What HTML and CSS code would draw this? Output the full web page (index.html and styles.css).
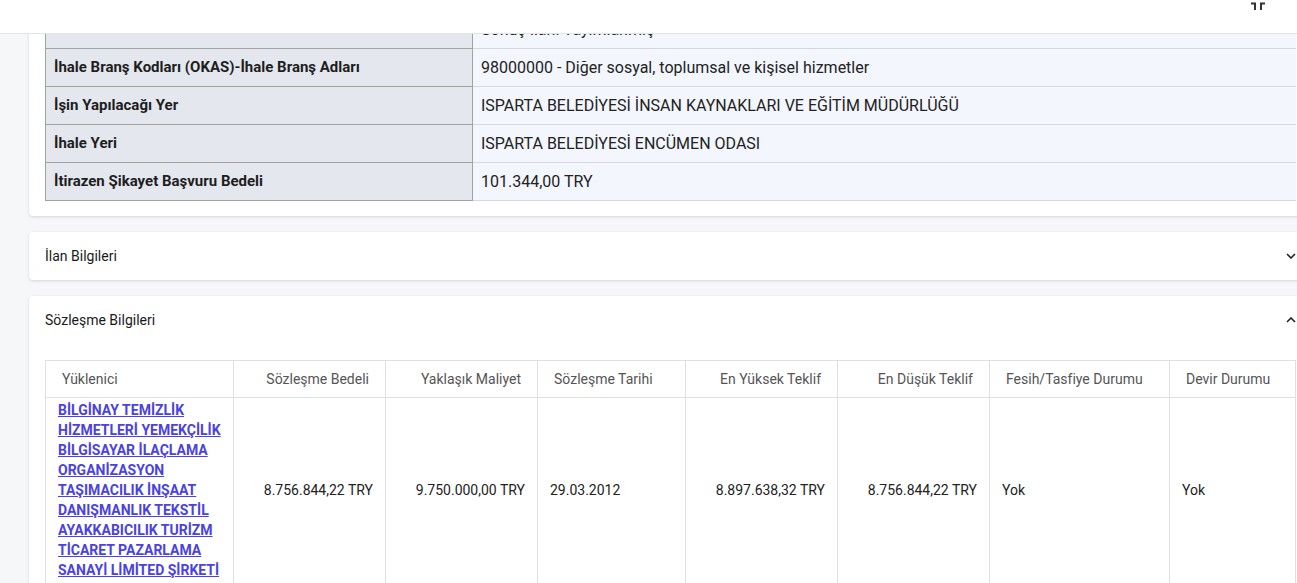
FILE: index.html
```html
<!DOCTYPE html>
<html lang="tr">
<head>
    <meta charset="UTF-8">
    <meta name="viewport" content="width=device-width, initial-scale=1.0">
    <title>İhale Detayı</title>
    <link rel="stylesheet" href="styles.css">
</head>
<body>
    <div class="topbar">
        <svg class="fs-icon" width="16" height="10" viewBox="0 0 16 10">
            <path d="M1 2.5 H5 V9" fill="none" stroke="#333" stroke-width="2"/>
            <path d="M15 2.5 H11 V9" fill="none" stroke="#333" stroke-width="2"/>
        </svg>
    </div>

    <div class="page">
        <div class="card card-info">
            <table class="info-table">
                <tr>
                    <th>İhale Durumu</th>
                    <td>Sonuç İlanı Yayımlanmış</td>
                </tr>
                <tr>
                    <th>İhale Branş Kodları (OKAS)-İhale Branş Adları</th>
                    <td>98000000 - Diğer sosyal, toplumsal ve kişisel hizmetler</td>
                </tr>
                <tr>
                    <th>İşin Yapılacağı Yer</th>
                    <td>ISPARTA BELEDİYESİ İNSAN KAYNAKLARI VE EĞİTİM MÜDÜRLÜĞÜ</td>
                </tr>
                <tr>
                    <th>İhale Yeri</th>
                    <td>ISPARTA BELEDİYESİ ENCÜMEN ODASI</td>
                </tr>
                <tr>
                    <th>İtirazen Şikayet Başvuru Bedeli</th>
                    <td>101.344,00 TRY</td>
                </tr>
            </table>
        </div>

        <div class="card">
            <div class="card-head">
                <span>İlan Bilgileri</span>
                <svg class="chev" width="10" height="6" viewBox="0 0 10 6"><path d="M1 1 L5 5 L9 1" fill="none" stroke="#222" stroke-width="1.6"/></svg>
            </div>
        </div>

        <div class="card">
            <div class="card-head">
                <span>Sözleşme Bilgileri</span>
                <svg class="chev" width="10" height="6" viewBox="0 0 10 6"><path d="M1 5 L5 1 L9 5" fill="none" stroke="#222" stroke-width="1.6"/></svg>
            </div>
            <div class="card-body">
                <table class="contract-table">
                    <thead>
                        <tr>
                            <th class="c1">Yüklenici</th>
                            <th class="c2 num">Sözleşme Bedeli</th>
                            <th class="c3 num">Yaklaşık Maliyet</th>
                            <th class="c4">Sözleşme Tarihi</th>
                            <th class="c5 num">En Yüksek Teklif</th>
                            <th class="c6 num">En Düşük Teklif</th>
                            <th class="c7">Fesih/Tasfiye Durumu</th>
                            <th>Devir Durumu</th>
                        </tr>
                    </thead>
                    <tbody>
                        <tr>
                            <td class="firm-cell"><a href="#" class="firm">BİLGİNAY TEMİZLİK HİZMETLERİ YEMEKÇİLİK BİLGİSAYAR İLAÇLAMA ORGANİZASYON TAŞIMACILIK İNŞAAT DANIŞMANLIK TEKSTİL AYAKKABICILIK TURİZM TİCARET PAZARLAMA SANAYİ LİMİTED ŞİRKETİ</a></td>
                            <td class="num">8.756.844,22 TRY</td>
                            <td class="num">9.750.000,00 TRY</td>
                            <td>29.03.2012</td>
                            <td class="num">8.897.638,32 TRY</td>
                            <td class="num">8.756.844,22 TRY</td>
                            <td>Yok</td>
                            <td>Yok</td>
                        </tr>
                    </tbody>
                </table>
            </div>
        </div>
    </div>
</body>
</html>
```

FILE: styles.css
```css
html, body {
    margin: 0;
    padding: 0;
}
body {
    font-family: Roboto, "Noto Sans", Arial, sans-serif;
    font-size: 14px;
    color: #222;
    background-color: #f6f7f9;
    overflow: hidden;
    height: 583px;
}
.topbar {
    position: fixed;
    top: 0;
    left: 0;
    right: 0;
    height: 33px;
    background: #fff;
    border-bottom: 1px solid #e2e4e8;
    z-index: 10;
}
.fs-icon {
    position: absolute;
    left: 1250px;
    top: 1px;
}
.page {
    margin-top: -6px;
    padding-left: 29px;
    width: 1283px;
    display: flex;
    flex-direction: column;
    gap: 16px;
}
.card {
    background: #fff;
    border-radius: 4px;
    box-shadow: 0 1px 3px rgba(0,0,0,0.14);
}
.card-info {
    padding: 16px 16px 15px;
}
.info-table {
    width: 100%;
    border-collapse: collapse;
    font-size: 16px;
}
.info-table th,
.info-table td {
    padding: 8px 8px;
    line-height: 21px;
    text-align: left;
    vertical-align: middle;
}
.info-table th {
    width: 410px;
    background: #e4e7ee;
    border: 1px solid #a2a2a2;
    font-weight: 700;
    font-size: 15px;
    color: #1e1e1e;
}
.info-table td {
    background: #f3f6fd;
    border-top: 1px solid #d6d8dc;
    border-bottom: 1px solid #d6d8dc;
    color: #222;
}
.card-head {
    height: 48px;
    padding: 0 16px;
    display: flex;
    align-items: center;
    justify-content: space-between;
    font-size: 14px;
    color: #1a1a1a;
}
.card-body {
    padding: 16px 16px 0;
}
.contract-table {
    width: 100%;
    border-collapse: collapse;
    table-layout: fixed;
    font-size: 14px;
}
.contract-table th,
.contract-table td {
    border: 1px solid #e0e0e0;
    text-align: left;
}
.contract-table th {
    font-weight: 400;
    color: #555;
    padding: 0 16px;
    height: 36px;
}
.contract-table td {
    padding: 2px 12px 12px 12px;
    color: #222;
    vertical-align: middle;
}
.contract-table .firm-cell {
    padding-right: 8px;
}
.contract-table .num {
    text-align: right;
}
.c1 { width: 155px; }
.c2 { width: 119px; }
.c3 { width: 119px; }
.c4 { width: 115px; }
.c5 { width: 119px; }
.c6 { width: 119px; }
.c7 { width: 147px; }
.firm {
    display: block;
    color: #4a42e2;
    font-weight: 700;
    font-size: 14px;
    line-height: 20px;
    text-decoration: underline;
}
```
